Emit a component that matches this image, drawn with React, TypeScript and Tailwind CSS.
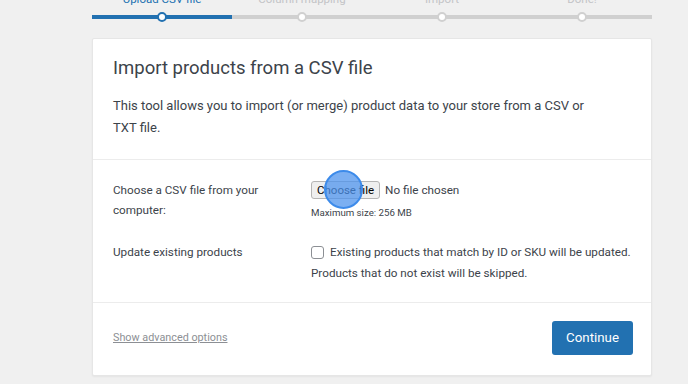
const steps = [
  { label: 'Upload CSV file', done: true, active: true },
  { label: 'Column mapping', done: false, active: false },
  { label: 'Import', done: false, active: false },
  { label: 'Done!', done: false, active: false },
];

function Stepper() {
  return (
    <div className="-mt-[9px] flex w-[560px]">
      {steps.map((step) => (
        <div key={step.label} className="flex flex-1 flex-col items-center">
          <span
            className={`text-[11.5px] leading-4 ${step.active ? 'text-[#2271b1]' : 'text-[#c3c4c7]'}`}
          >
            {step.label}
          </span>
          <div className="relative mt-[5px] flex h-[10px] w-full items-center justify-center">
            <div
              className={`absolute inset-x-0 top-[3px] h-[4px] ${step.done ? 'bg-[#2271b1]' : 'bg-[#d0d0d0]'}`}
            />
            <div
              className={`relative h-[10px] w-[10px] rounded-full border-2 bg-white ${step.active ? 'border-[#2271b1]' : 'border-[#d0d0d0]'}`}
            />
          </div>
        </div>
      ))}
    </div>
  );
}

export default function App() {
  return (
    <div
      className="min-h-[384px] overflow-hidden bg-[#f0f0f0] pl-[92px] text-[#3c434a]"
      style={{ fontFamily: 'Roboto, "Liberation Sans", sans-serif' }}
    >
      <Stepper />

      <div className="mt-[16px] w-[560px] rounded-[2px] border border-[#e6e6e6] bg-white shadow-[0_1px_2px_rgba(0,0,0,0.05)]">
        <div className="border-b border-[#ececec] px-5 pt-[16px] pb-5">
          <h1 className="text-[18.5px] leading-[26px] text-[#3c434a]">Import products from a CSV file</h1>
          <p className="mt-[14px] max-w-[485px] text-[13px] leading-[22px]">
            This tool allows you to import (or merge) product data to your store from a CSV or
            TXT file.
          </p>
        </div>

        <div className="flex flex-col gap-[22px] border-b border-[#ececec] px-5 pt-5 pb-[19px] text-[11.7px] leading-5">
          <div className="flex">
            <div className="w-[198px] shrink-0 pr-8">Choose a CSV file from your computer:</div>
            <div className="flex-1">
              <div className="relative flex items-center gap-[5px]">
                <button
                  type="button"
                  className="h-[18px] rounded-[3px] border border-[#b5b5b5] bg-[#efefef] px-[5px] text-[11.5px] leading-4 text-black"
                >
                  Choose file
                </button>
                <span className="text-[#3c434a]">No file chosen</span>
                <div className="absolute left-[13px] top-[-10px] h-[39px] w-[39px] rounded-full border-2 border-[#3d8bea] bg-[#4f94ee]/75" />
              </div>
              <div className="mt-[6px] text-[9.7px] leading-[14px]">Maximum size: 256 MB</div>
            </div>
          </div>

          <div className="flex">
            <div className="w-[198px] shrink-0 pr-8">Update existing products</div>
            <div className="flex-1">
              <div className="flex items-center gap-[6px]">
                <span className="h-[13px] w-[13px] shrink-0 rounded-[3px] border border-[#8c8f94] bg-white" />
                <span className="whitespace-nowrap">Existing products that match by ID or SKU will be updated.</span>
              </div>
              <div className="mt-[1px]">Products that do not exist will be skipped.</div>
            </div>
          </div>
        </div>

        <div className="flex items-center justify-between pl-5 pr-[18px] pt-[18px] pb-5">
          <a href="#" className="text-[10.8px] text-[#8c8f94] underline">
            Show advanced options
          </a>
          <button
            type="button"
            className="h-[34px] w-[81px] rounded-[3px] bg-[#2271b1] text-[13.3px] text-white"
          >
            Continue
          </button>
        </div>
      </div>
    </div>
  );
}
